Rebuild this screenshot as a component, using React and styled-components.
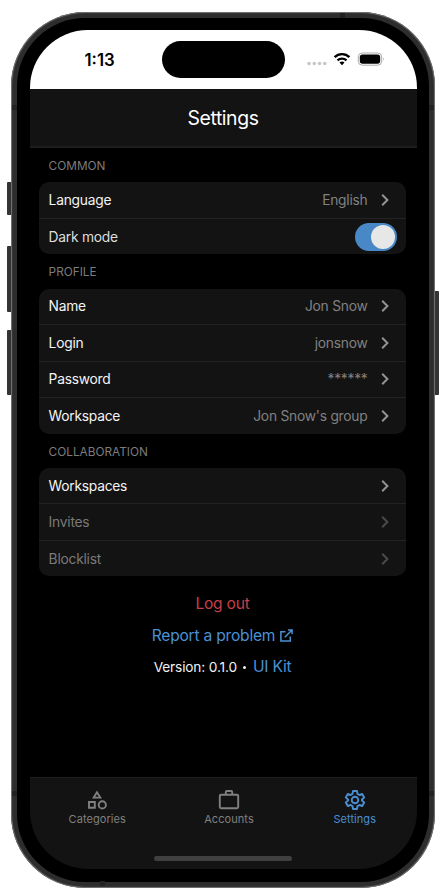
import React from "react";
import styled, { createGlobalStyle } from "styled-components";

const GlobalStyle = createGlobalStyle`
  * { box-sizing: border-box; }
  body { margin: 0; background: #fff; font-family: Inter, "Liberation Sans", sans-serif; }
`;

const Stage = styled.main`
  position: relative;
  width: 446px;
  height: 890px;
  overflow: hidden;
  padding: 12px 10px 2px 11px;
`;

const SideButton = styled.span`
  position: absolute;
  top: ${(p) => p.$top}px;
  ${(p) => (p.$side === "left" ? "left: 7px;" : "left: 434px;")}
  width: 5px;
  height: ${(p) => p.$height}px;
  background: #343434;
  border-radius: 1px;
`;

const Phone = styled.div`
  position: relative;
  width: 424px;
  height: 875.5px;
  padding: 6px;
  border-radius: 74px;
  background: #2d2d2d;
  box-shadow: inset 0 0 1px 1px #777;
`;

const Antenna = styled.span`
  position: absolute;
  left: ${(p) => p.$x}px;
  top: ${(p) => p.$y}px;
  width: 5px;
  height: 5px;
  background: #222;
`;

const Bezel = styled.div`
  height: 863.5px;
  padding: 12px 12.5px 12.5px;
  border-radius: 68px;
  background: #000;
`;

const Screen = styled.div`
  height: 839px;
  display: flex;
  flex-direction: column;
  overflow: hidden;
  border-radius: 58px;
  background: #000;
`;

const StatusBar = styled.div`
  display: grid;
  grid-template-columns: 132px 123px 1fr;
  height: 58.5px;
  flex: none;
  background: #fff;
`;

const Time = styled.div`
  padding: 20px 0 0 55px;
  font-size: 16.8px;
  line-height: 20px;
  font-weight: 600;
`;

const Island = styled.div`
  height: 36.5px;
  margin-top: 11.3px;
  border-radius: 19px;
  background: #000;
`;

const StatusIcons = styled.svg`
  width: 80px;
  height: 18px;
  margin: 20px 0 0 21px;
`;

const Header = styled.header`
  height: 59.5px;
  flex: none;
  display: flex;
  align-items: center;
  justify-content: center;
  padding-top: 2px;
  background: #131313;
  border-bottom: 2px solid #1d1d1d;
  color: #fff;
  font-size: 19.4px;
  letter-spacing: -0.4px;
`;

const Content = styled.div`
  flex: 1;
  padding: 0 10.5px 0 9.5px;
`;

const SectionTitle = styled.h2`
  height: 34.4px;
  margin: 0;
  padding: 1px 10px 0 9.6px;
  line-height: 34px;
  font-size: 11.8px;
  font-weight: 400;
  letter-spacing: 0;
  color: #7c7c7c;
`;

const Card = styled.section`
  overflow: hidden;
  border-radius: 10px;
  background: #131313;
`;

const Row = styled.div`
  height: 36.4px;
  display: flex;
  align-items: center;
  padding: 0 9.5px 0 9.6px;
  font-size: 13.8px;
  letter-spacing: -0.24px;
  color: ${(p) => (p.$disabled ? "#7a7a7a" : p.$soft ? "#dedede" : "#f4f4f4")};
  border-bottom: 1px solid #232323;
  &:last-child { border-bottom: 0; height: 35.6px; }
`;

const Value = styled.span`
  margin-left: auto;
  color: #818181;
`;

const Chevron = styled.svg`
  width: 12px;
  height: 14px;
  margin: 0 6px 0 11px;
  fill: none;
  stroke: ${(p) => (p.$disabled ? "#4a4a4a" : "#929292")};
  stroke-width: 2;
`;

const Switch = styled.span`
  width: 42px;
  height: 28px;
  margin-left: auto;
  padding: 2px;
  display: flex;
  justify-content: flex-end;
  border-radius: 14px;
  background: #4888c6;
`;

const Knob = styled.span`
  width: 24px;
  height: 24px;
  border-radius: 50%;
  background: #e7e7e7;
`;

const Links = styled.div`
  display: flex;
  flex-direction: column;
  align-items: center;
  padding-top: 11.8px;
`;

const LinkLine = styled.div`
  height: 31.5px;
  display: flex;
  align-items: center;
  gap: 5px;
  font-size: 15.6px;
  letter-spacing: -0.22px;
  color: ${(p) => p.$color};
`;

const Version = styled.span`
  font-size: 13.7px;
  letter-spacing: -0.15px;
  color: #f1f1f1;
`;

const Dot = styled.span`
  display: inline-block;
  width: 3px;
  height: 3px;
  margin: 0 2px 0 6px;
  vertical-align: 3px;
  border-radius: 50%;
  background: #f1f1f1;
`;

const Blue = styled.span`
  color: #4b91d4;
`;

const ExternalIcon = styled.svg`
  width: 13px;
  height: 13px;
  fill: none;
  stroke: currentColor;
  stroke-width: 1.5;
`;

const TabBar = styled.nav`
  position: relative;
  height: 92.5px;
  flex: none;
  display: grid;
  grid-template-columns: 135.5px 128px 123.5px;
  background: #131313;
  border-top: 1.5px solid #1f1f1f;
`;

const Tab = styled.div`
  display: flex;
  flex-direction: column;
  align-items: center;
  padding-top: 10px;
  color: ${(p) => (p.$active ? "#4a8fd1" : "#808080")};
  font-size: 11px;
  line-height: 14px;
  letter-spacing: 0.06px;
`;

const TabIcon = styled.svg`
  width: 24px;
  height: 24px;
  margin-bottom: 0.5px;
  fill: none;
  stroke: currentColor;
  stroke-width: 1.9;
`;

const HomeBar = styled.span`
  position: absolute;
  left: 124.5px;
  bottom: 8px;
  width: 138px;
  height: 5px;
  border-radius: 3px;
  background: #404040;
`;

const sections = [
  { title: "COMMON", rows: [
    { label: "Language", value: "English" },
    { label: "Dark mode", toggle: true },
  ] },
  { title: "PROFILE", rows: [
    { label: "Name", value: "Jon Snow" },
    { label: "Login", value: "jonsnow" },
    { label: "Password", value: "******" },
    { label: "Workspace", value: "Jon Snow's group" },
  ] },
  { title: "COLLABORATION", rows: [
    { label: "Workspaces" },
    { label: "Invites", disabled: true },
    { label: "Blocklist", disabled: true },
  ] },
];

function SettingRow({ label, value, toggle, disabled }) {
  return (
    <Row $disabled={disabled} $soft={toggle}>
      {label}
      {toggle ? <Switch><Knob /></Switch> : (
        <>
          <Value>{value}</Value>
          <Chevron $disabled={disabled} viewBox="0 0 12 14"><path d="M3.2 1.8L8.4 7l-5.2 5.2" /></Chevron>
        </>
      )}
    </Row>
  );
}

export default function App() {
  return (
    <>
      <GlobalStyle />
      <Stage>
        <SideButton $side="left" $top={182} $height={33} />
        <SideButton $side="left" $top={246} $height={66} />
        <SideButton $side="left" $top={330} $height={65} />
        <SideButton $side="right" $top={291} $height={104} />
        <Phone>
          <Antenna $x={329} $y={1} />
          <Antenna $x={1} $y={93} />
          <Antenna $x={418} $y={93} />
          <Antenna $x={1} $y={779} />
          <Antenna $x={418} $y={779} />
          <Antenna $x={89} $y={869} />
          <Bezel>
            <Screen>
              <StatusBar>
                <Time>1:13</Time>
                <Island />
                <StatusIcons viewBox="0 0 80 18">
                  <g fill="#c7c7c7">
                    <circle cx="3" cy="13.5" r="1.8" />
                    <circle cx="8.3" cy="13.5" r="1.8" />
                    <circle cx="13.5" cy="13.5" r="1.8" />
                    <circle cx="18.8" cy="13.5" r="1.8" />
                  </g>
                  <g fill="none" stroke="#000" strokeWidth="2.4">
                    <path d="M28.6 7.2a10.5 10.5 0 0 1 14.8 0" />
                    <path d="M31.5 10.4a6.5 6.5 0 0 1 9 0" />
                  </g>
                  <path d="M33.5 12.6q2.5-2 5 0L36 15.2z" fill="#000" />
                  <rect x="52.3" y="3" width="23.4" height="12.2" rx="4" fill="none" stroke="#aaa" />
                  <rect x="53.8" y="4.5" width="20.4" height="9.2" rx="2.7" />
                  <path d="M77 7.2q1.6 1.8 0 3.8z" fill="#aaa" />
                </StatusIcons>
              </StatusBar>
              <Header>Settings</Header>
              <Content>
                {sections.map((section) => (
                  <React.Fragment key={section.title}>
                    <SectionTitle>{section.title}</SectionTitle>
                    <Card>{section.rows.map((row) => <SettingRow key={row.label} {...row} />)}</Card>
                  </React.Fragment>
                ))}
                <Links>
                  <LinkLine $color="#c43f49">Log out</LinkLine>
                  <LinkLine $color="#4b91d4">
                    Report a problem
                    <ExternalIcon viewBox="0 0 13 13">
                      <path d="M5.4 2.7H.9v9.4h9.4V7.6M8 .9h4.1V5M12 1L4.8 8.2" />
                    </ExternalIcon>
                  </LinkLine>
                  <LinkLine><Version>Version: 0.1.0<Dot /></Version><Blue>UI Kit</Blue></LinkLine>
                </Links>
              </Content>
              <TabBar>
                <Tab>
                  <TabIcon viewBox="0 0 24 24">
                    <path d="M12 4.2L8.7 9.6h6.6zM4 14h5.8v5.8H4z" />
                    <circle cx="17.3" cy="16.9" r="3.6" />
                  </TabIcon>
                  Categories
                </Tab>
                <Tab>
                  <TabIcon viewBox="0 0 24 24">
                    <rect x="2.8" y="6.8" width="18.4" height="13.4" rx="1.2" />
                    <path d="M8.8 6.5V4q0-1 1-1h4.4q1 0 1 1v2.5" />
                  </TabIcon>
                  Accounts
                </Tab>
                <Tab $active>
                  <TabIcon viewBox="0 0 24 24" strokeLinejoin="round">
                    <path d="M10 3h4l.5 2.9 1.9 1.1 2.8-1 2 3.5-2.3 1.9v1.2l2.3 1.9-2 3.5-2.8-1-1.9 1.1L14 21h-4l-.5-2.9L7.6 17l-2.8 1-2-3.5 2.3-1.9v-1.2L2.8 9.5l2-3.5 2.8 1 1.9-1.1z" />
                    <circle cx="12" cy="12" r="3.3" />
                  </TabIcon>
                  Settings
                </Tab>
                <HomeBar />
              </TabBar>
            </Screen>
          </Bezel>
        </Phone>
      </Stage>
    </>
  );
}
